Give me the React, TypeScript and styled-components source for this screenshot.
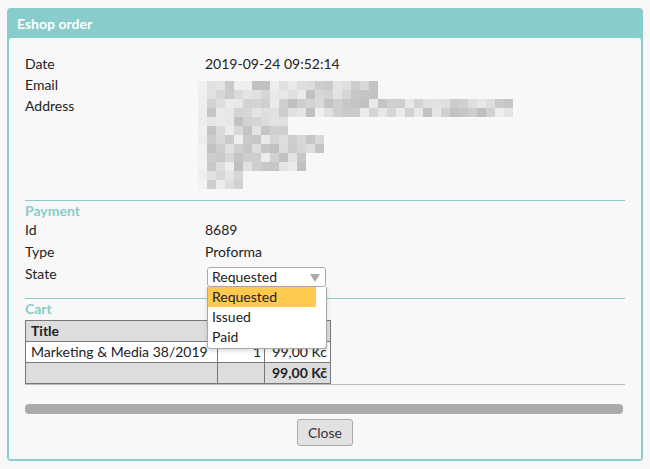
import React from "react";
import styled, { createGlobalStyle } from "styled-components";

const teal = "#88cdcb";
const font = `"Lato", "Noto Sans", sans-serif`;

const Global = createGlobalStyle`
  html, body { margin: 0; padding: 0; background: #f7f7f7; }
  body { font-family: ${font}; font-size: 14px; color: #222; }
  * { box-sizing: border-box; }
`;

const Page = styled.div`
  padding: 8px 7px;
  width: 650px;
  height: 469px;
`;

const Dialog = styled.div`
  width: 636px;
  height: 453px;
  background: ${teal};
  border: 2px solid ${teal};
  border-radius: 4px;
  display: flex;
  flex-direction: column;
`;

const TitleBar = styled.div`
  height: 28px;
  line-height: 28px;
  padding-left: 8px;
  color: #fff;
  font-weight: 700;
  font-size: 14px;
`;

const Body = styled.div`
  flex: 1;
  background: #f8f8f8;
  border-radius: 3px 3px 0 0;
  padding: 15px 16px 0 16px;
  display: flex;
  flex-direction: column;
`;

const Section = styled.div<{ $line?: string; $pb: number }>`
  border-bottom: 1px solid ${(p) => p.$line || teal};
  padding-bottom: ${(p) => p.$pb}px;
`;

const InfoGrid = styled.div`
  display: grid;
  grid-template-columns: 180px 1fr;
  grid-template-rows: 21px 21px auto;
  line-height: 21px;
`;

const Label = styled.div``;

const Value = styled.div``;

const PixelBox = styled.div`
  grid-column: 2;
  grid-row: 2 / span 2;
  margin-top: 7px;
  margin-left: -7px;
  height: 108px;
`;

const Heading = styled.div`
  color: ${teal};
  font-weight: 700;
  line-height: 15px;
  padding-top: 2px;
`;

const PayGrid = styled.div`
  display: grid;
  grid-template-columns: 180px 1fr;
  grid-auto-rows: 22px;
  line-height: 22px;
  padding-top: 1px;
`;

const SelectWrap = styled.div`
  position: relative;
  padding-top: 4px;
  margin-left: 2px;
`;

const SelectBox = styled.div`
  width: 119px;
  height: 20px;
  border: 1px solid #aaa;
  border-radius: 3px;
  background: #fff;
  line-height: 18px;
  padding-left: 4px;
  position: relative;
`;

const Arrow = styled.span`
  position: absolute;
  right: 5px;
  top: 6px;
  width: 0;
  height: 0;
  border-left: 5px solid transparent;
  border-right: 5px solid transparent;
  border-top: 8px solid #aaa;
`;

const DropList = styled.div`
  position: absolute;
  left: 0;
  top: 24px;
  width: 120px;
  background: #fff;
  border: 1px solid #aaa;
  border-top: none;
  border-radius: 0 0 3px 3px;
  box-shadow: 0 2px 4px rgba(0, 0, 0, 0.15);
  padding-bottom: 1px;
  z-index: 5;
`;

const Option = styled.div<{ $active?: boolean }>`
  width: 108px;
  height: 20px;
  line-height: 20px;
  padding-left: 4px;
  background: ${(p) => (p.$active ? "#ffc94f" : "transparent")};
`;

const CartTable = styled.table`
  margin-top: 4px;
  border-collapse: collapse;
  width: 306px;
  font-size: 14px;
  line-height: 20px;
`;

const Cell = styled.td<{ $w?: number; $right?: boolean; $bold?: boolean; $gray?: boolean }>`
  border: 1px solid #777;
  padding: 0 3px 0 5px;
  height: 21px;
  width: ${(p) => (p.$w ? `${p.$w}px` : "auto")};
  text-align: ${(p) => (p.$right ? "right" : "left")};
  font-weight: ${(p) => (p.$bold ? 700 : 400)};
  background: ${(p) => (p.$gray ? "#dddddd" : "#fff")};
  white-space: nowrap;
`;

const Progress = styled.div`
  margin-top: 19px;
  width: 598px;
  height: 10px;
  border-radius: 4px;
  background: #aaa;
`;

const ButtonRow = styled.div`
  display: flex;
  justify-content: center;
  margin-top: 5px;
`;

const Button = styled.button`
  width: 56px;
  height: 27px;
  border: 1px solid #aaa;
  border-radius: 3px;
  background: #e2e2e2;
  color: #333;
  font-family: ${font};
  font-size: 14px;
  padding: 0;
`;

const rowCols = [20, 20, 35, 35, 10, 10, 14, 14, 12, 12, 5, 5];

function shade(r: number, c: number) {
  let x = Math.sin(r * 12.9898 + c * 78.233 + 3.1) * 43758.5453;
  x = x - Math.floor(x);
  if (c === 0) return 236 + Math.floor(x * 8);
  return 192 + Math.floor(x * 48);
}

const Pixels: React.FC = () => {
  const rects: React.ReactNode[] = [];
  rowCols.forEach((n, r) => {
    for (let c = 0; c < n; c++) {
      const v = shade(r, c);
      rects.push(
        <rect key={`${r}-${c}`} x={c * 9} y={r * 9} width={9} height={9} fill={`rgb(${v},${v},${v})`} />
      );
    }
  });
  return (
    <svg width={315} height={108} viewBox="0 0 315 108" shapeRendering="crispEdges">
      {rects}
    </svg>
  );
};

export default function App() {
  return (
    <>
      <Global />
      <Page>
        <Dialog>
          <TitleBar>Eshop order</TitleBar>
          <Body>
            <Section $pb={11}>
              <InfoGrid>
                <Label>Date</Label>
                <Value>2019-09-24 09:52:14</Value>
                <Label>Email</Label>
                <PixelBox>
                  <Pixels />
                </PixelBox>
                <Label>Address</Label>
              </InfoGrid>
            </Section>
            <Section $pb={13}>
              <Heading>Payment</Heading>
              <PayGrid>
                <Label>Id</Label>
                <Value>8689</Value>
                <Label>Type</Label>
                <Value>Proforma</Value>
                <Label>State</Label>
                <SelectWrap>
                  <SelectBox>
                    Requested
                    <Arrow />
                  </SelectBox>
                  <DropList>
                    <Option $active>Requested</Option>
                    <Option>Issued</Option>
                    <Option>Paid</Option>
                  </DropList>
                </SelectWrap>
              </PayGrid>
            </Section>
            <Section $pb={0} $line="#bbb">
              <Heading>Cart</Heading>
              <CartTable>
                <tbody>
                  <tr>
                    <Cell $gray $bold colSpan={3}>Title</Cell>
                  </tr>
                  <tr>
                    <Cell $w={192}>Marketing &amp; Media 38/2019</Cell>
                    <Cell $w={47} $right>1</Cell>
                    <Cell $w={66} $right>99,00 Kč</Cell>
                  </tr>
                  <tr>
                    <Cell $gray></Cell>
                    <Cell $gray></Cell>
                    <Cell $gray $right $bold>99,00 Kč</Cell>
                  </tr>
                </tbody>
              </CartTable>
            </Section>
            <Progress />
            <ButtonRow>
              <Button>Close</Button>
            </ButtonRow>
          </Body>
        </Dialog>
      </Page>
    </>
  );
}
